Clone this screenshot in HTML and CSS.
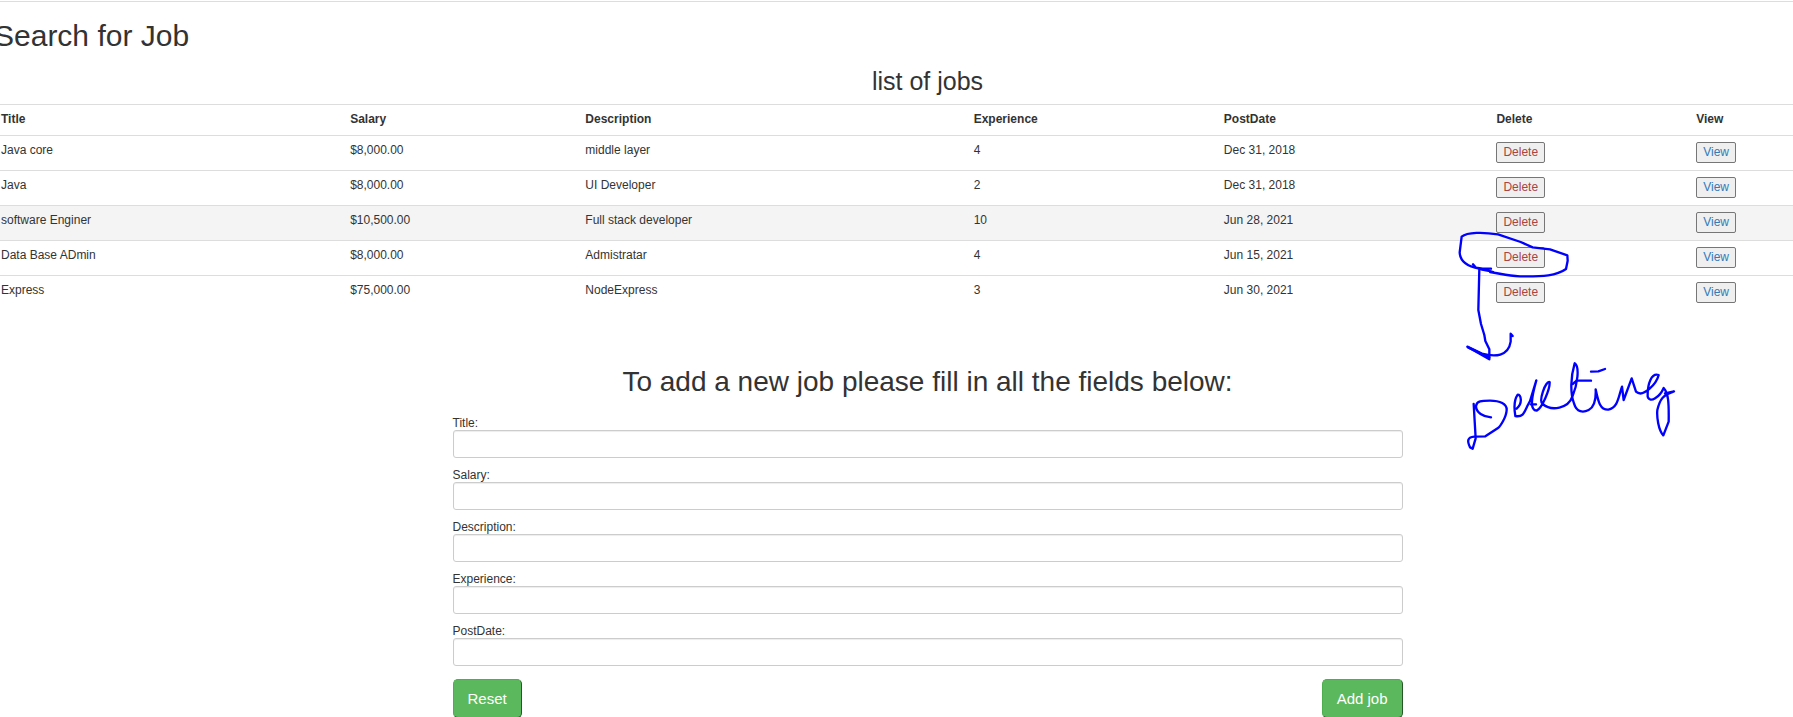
FILE: index.html
```html
<!DOCTYPE html>
<html lang="en">
<head>
<meta charset="utf-8">
<title>Search for Job</title>
<link rel="stylesheet" href="styles.css">
</head>
<body>
<main class="page">
  <hr class="divider">
  <h1 class="page-title">Search for Job</h1>
  <h2 class="list-title">list of jobs</h2>
  <table class="jobs">
    <colgroup>
      <col class="col-title"><col class="col-salary"><col class="col-description"><col class="col-experience"><col class="col-date"><col class="col-delete"><col class="col-view">
    </colgroup>
    <thead>
      <tr><th>Title</th><th>Salary</th><th>Description</th><th>Experience</th><th>PostDate</th><th>Delete</th><th>View</th></tr>
    </thead>
    <tbody>
      <tr><td>Java core</td><td>$8,000.00</td><td>middle layer</td><td>4</td><td>Dec 31, 2018</td><td><button class="action action-delete" type="button">Delete</button></td><td><button class="action action-view" type="button">View</button></td></tr>
      <tr><td>Java</td><td>$8,000.00</td><td>UI Developer</td><td>2</td><td>Dec 31, 2018</td><td><button class="action action-delete" type="button">Delete</button></td><td><button class="action action-view" type="button">View</button></td></tr>
      <tr class="is-hovered"><td>software Enginer</td><td>$10,500.00</td><td>Full stack developer</td><td>10</td><td>Jun 28, 2021</td><td><button class="action action-delete" type="button">Delete</button></td><td><button class="action action-view" type="button">View</button></td></tr>
      <tr><td>Data Base ADmin</td><td>$8,000.00</td><td>Admistratar</td><td>4</td><td>Jun 15, 2021</td><td><button class="action action-delete" type="button">Delete</button></td><td><button class="action action-view" type="button">View</button></td></tr>
      <tr><td>Express</td><td>$75,000.00</td><td>NodeExpress</td><td>3</td><td>Jun 30, 2021</td><td><button class="action action-delete" type="button">Delete</button></td><td><button class="action action-view" type="button">View</button></td></tr>
    </tbody>
  </table>

  <h2 class="form-title">To add a new job please fill in all the fields below:</h2>
  <form class="job-form">
    <div class="field"><label for="title">Title:</label><input id="title" type="text"></div>
    <div class="field"><label for="salary">Salary:</label><input id="salary" type="text"></div>
    <div class="field"><label for="description">Description:</label><input id="description" type="text"></div>
    <div class="field"><label for="experience">Experience:</label><input id="experience" type="text"></div>
    <div class="field"><label for="postdate">PostDate:</label><input id="postdate" type="text"></div>
    <div class="form-actions">
      <button class="submit" type="reset">Reset</button>
      <button class="submit" type="button">Add job</button>
    </div>
  </form>

  <svg class="ink" viewBox="0 0 780 720" aria-hidden="true">
    <path d="M99 133L108 143L128 146L153 146M160 156C140 150 130 152 118 146C85 140 60 125 59 97L65 50C82 36 130 36 174 43L242 66L278 82L330 88L382 106L383 122L378 147C350 167 310 170 240 169C200 168 180 160 150 156"/>
    <path d="M118 146L115 270L123 312L133 345L136 363L148 388L148 418L82 380L125 401C165 411 205 410 212 365L212 341L218 348"/>
    <path d="M84 382L148 412"/>
    <path d="M153 592C130 590 108 578 108 558C110 542 125 542 150 542C180 542 201 552 200 570C199 592 180 620 174 624L136 649L103 650C80 652 82 665 90 682L98 686L107 655L101 552"/>
    <path d="M230 566C250 548 242 524 233 524C222 540 222 565 226 588C248 592 252 580 262 558L270 543L289 481C275 530 268 570 290 572C305 565 330 510 329 486C316 482 295 545 308 552C335 575 385 565 397 530C412 495 420 440 404 430C392 470 390 520 402 550C410 578 430 578 446 570C465 560 468 530 467 508C475 545 480 570 505 569C535 562 535 530 546 500L551 540L575 475L588 515C610 535 650 490 656 465C635 458 622 490 623 530C630 552 660 530 671 504C685 520 687 545 686 605L670 646C655 630 650 590 652 570C660 535 670 525 702 514L675 520"/>
    <path d="M272 553L288 553M398 492L410 482L453 482M453 455L475 454L495 447"/>
  </svg>
</main>
</body>
</html>
```
FILE: styles.css
```css
* { box-sizing: border-box; }

html { overflow: hidden; }

body {
  margin: 0;
  background: #fff;
  color: #333;
  font: 12px/17px "Liberation Sans", Arial, sans-serif;
}

/* The content is wider than the window and scrolled slightly to the right. */
.page {
  position: relative;
  width: calc(100% + 74px);
  margin-left: -6px;
  padding-top: 1px;
}

.divider {
  margin: 0;
  border: 0;
  border-top: 1px solid #ddd;
}

h1, h2 { margin: 0; font-weight: 400; }

.page-title {
  padding: 17px 0 0;
  font-size: 30px;
  line-height: 33px;
}

.list-title {
  padding: 15px 0 9px;
  font-size: 25px;
  line-height: 28px;
  text-align: center;
}

.jobs {
  width: 100%;
  table-layout: fixed;
  border-collapse: separate;
  border-spacing: 0;
}

.col-title { width: 18.7%; }
.col-salary { width: 12.6%; }
.col-description { width: 20.8%; }
.col-experience { width: 13.4%; }
.col-date { width: 14.6%; }
.col-delete { width: 10.7%; }
.col-view { width: 9.2%; }

.jobs th, .jobs td {
  padding: 6px 7px;
  border-top: 1px solid #ddd;
  text-align: left;
  vertical-align: top;
}

.jobs th { height: 31px; }
.jobs td { height: 35px; }
.jobs .is-hovered { background: #f4f4f4; }

.action {
  display: block;
  margin: 0;
  padding: 0 6px;
  height: 21px;
  border: 1px solid #767676;
  border-radius: 2px;
  background: #efefef;
  font: inherit;
}

.action-delete { color: #a94442; }
.action-view { color: #337ab7; }

.form-title {
  padding: 56px 0 20px;
  font-size: 28px;
  line-height: 31px;
  text-align: center;
}

.job-form {
  display: grid;
  gap: 11px;
  width: 51%;
  max-width: 950px;
  margin: 0 auto;
}

.field {
  display: grid;
  line-height: 13px;
}

.field input {
  width: 100%;
  height: 28px;
  padding: 5px 10px;
  border: 1px solid #ccc;
  border-radius: 3px;
  background: #fff;
  box-shadow: inset 0 1px 1px rgba(0, 0, 0, .075);
  color: #555;
  font: inherit;
}

.form-actions {
  display: flex;
  justify-content: space-between;
  padding-top: 2px;
}

.submit {
  height: 39px;
  padding: 0 14px;
  border: 1px solid #4cae4c;
  border-right-color: #265726;
  border-bottom-color: #265726;
  border-radius: 5px;
  background: #5cb85c;
  color: #fff;
  font: 15px/20px "Liberation Sans", Arial, sans-serif;
}

/* Freehand ink drawn over the page. */
.ink {
  position: absolute;
  top: 220px;
  left: 1446px;
  width: 260px;
  height: 240px;
  fill: none;
  stroke: #00f;
  stroke-width: 7;
  stroke-linecap: round;
  stroke-linejoin: round;
  pointer-events: none;
}
```
